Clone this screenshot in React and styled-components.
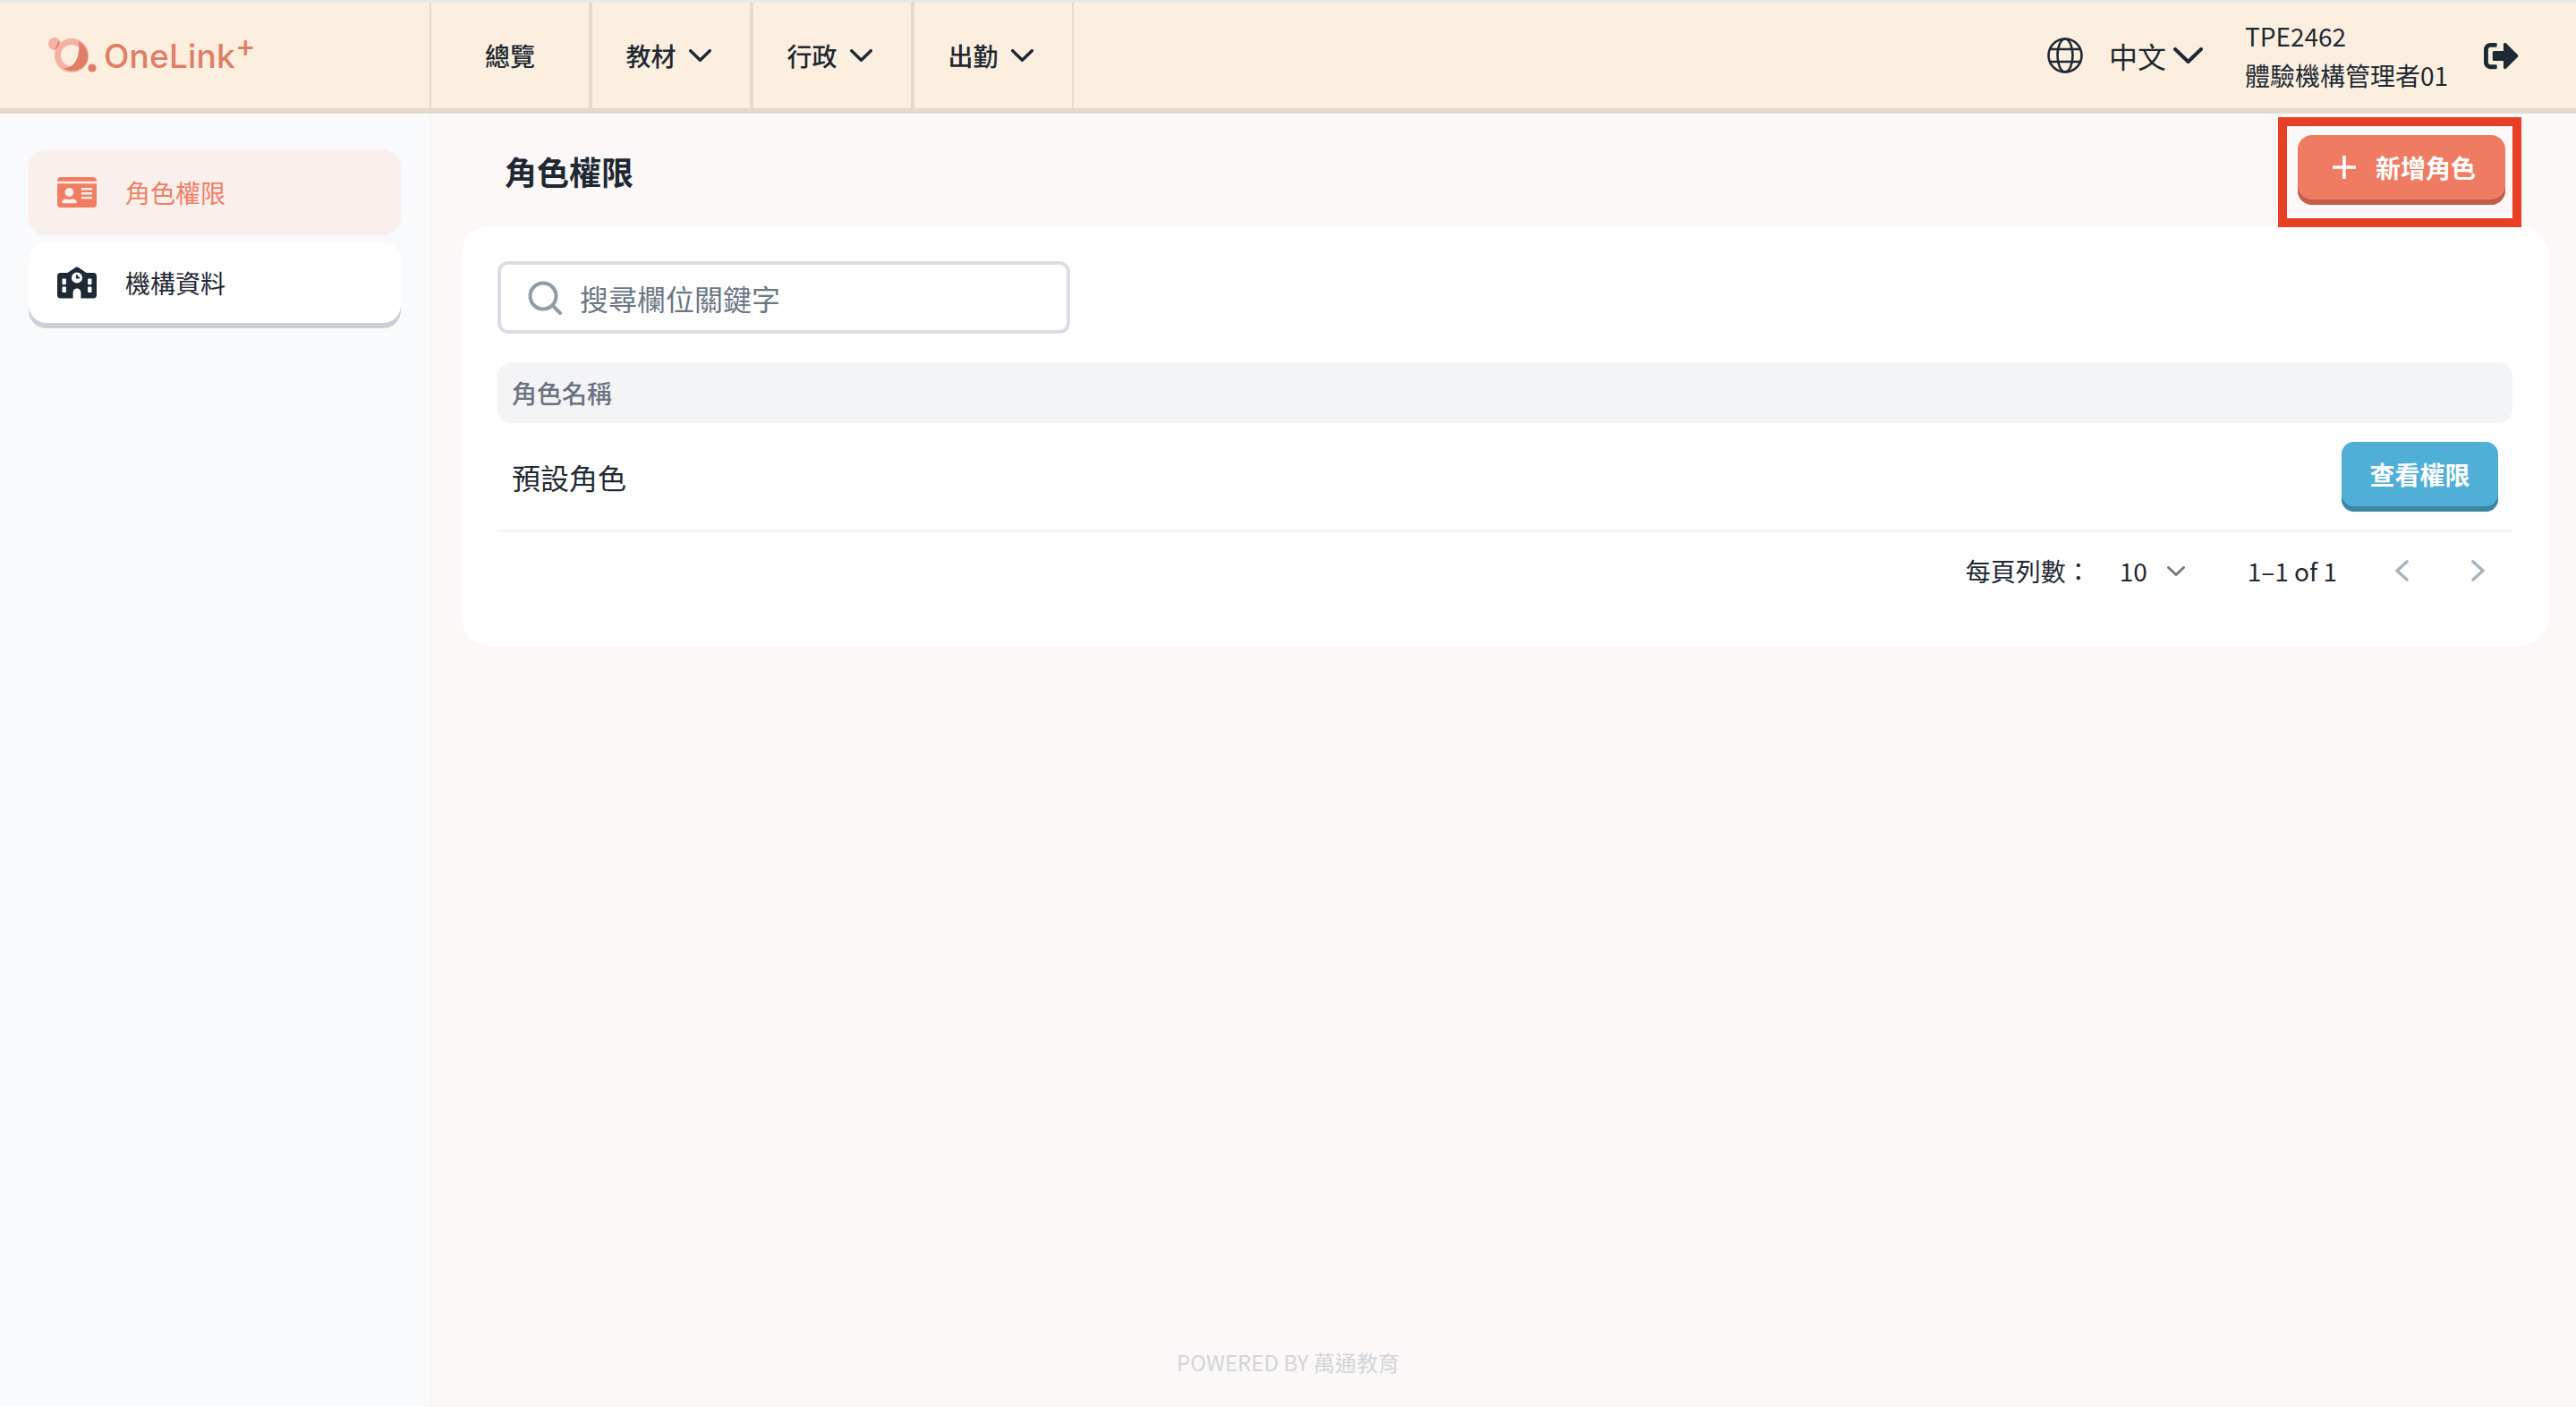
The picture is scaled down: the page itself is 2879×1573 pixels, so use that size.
import React from "react";
import styled, { createGlobalStyle } from "styled-components";
import { FaIdCard, FaSignOutAlt } from "react-icons/fa";
import { FaSchool } from "react-icons/fa6";

const Global = createGlobalStyle`
  html, body { margin: 0; padding: 0; height: 100%; }
  body { font-family: "Noto Sans CJK TC", "Noto Sans", sans-serif; color: #1f2933; background: #fcf8f7; }
  * { box-sizing: border-box; }
`;

const Page = styled.div`
  position: relative;
  display: flex;
  flex-direction: column;
  height: 1573px;
  overflow: hidden;
`;

const Header = styled.header`
  display: flex;
  align-items: stretch;
  height: 127px;
  background: #fcefdf;
  border-top: 3px solid #e8e8ec;
  border-bottom: 6px solid #e3d9cf;
`;

const Brand = styled.div`
  display: flex;
  align-items: center;
  width: 480px;
  padding-left: 52px;
  gap: 2px;
`;

const BrandName = styled.span`
  font-family: "Inter", "Noto Sans", sans-serif;
  font-size: 37px;
  font-weight: 500;
  line-height: 1;
  letter-spacing: 0.2px;
  color: #e07e66;
  position: relative;
  top: 0;
  sup {
    font-size: 34px;
    font-weight: 500;
    line-height: 0;
    position: relative;
    top: -3px;
    vertical-align: 10px;
  }
`;

const Nav = styled.nav`
  display: flex;
`;

const NavItem = styled.div`
  display: flex;
  align-items: center;
  justify-content: center;
  gap: 14px;
  width: 180px;
  padding-right: ${(p) => (p.$menu ? 6 : 0)}px;
  border-left: 2px solid #e3d9cf;
  border-right: 2px solid #e3d9cf;
  font-size: 28px;
  font-weight: 500;
  color: #1f2933;
`;

const Chevron = styled.svg`
  width: ${(p) => p.$w}px;
  height: ${(p) => p.$h}px;
  fill: none;
  stroke: ${(p) => p.$color || "#1f2933"};
  stroke-width: ${(p) => p.$sw || 3};
  stroke-linecap: round;
  stroke-linejoin: round;
  flex: none;
`;

const HeaderRight = styled.div`
  margin-left: auto;
  display: flex;
  align-items: center;
  padding-right: 64px;
`;

const Globe = styled.svg`
  width: 40px;
  height: 40px;
  fill: none;
  stroke: #1f2933;
  stroke-width: 2.6;
  margin-right: 29px;
`;

const Lang = styled.span`
  font-size: 32px;
  line-height: 1;
  margin-right: 8px;
`;

const User = styled.div`
  display: flex;
  flex-direction: column;
  margin-left: 47px;
  margin-right: 40px;
  font-size: 28px;
  line-height: 44px;
  color: #1f2933;
  white-space: nowrap;
`;

const Logout = styled(FaSignOutAlt)`
  width: 39px;
  height: 39px;
  color: #1f2933;
`;

const Body = styled.div`
  flex: 1;
  display: flex;
  min-height: 0;
`;

const Sidebar = styled.aside`
  width: 484px;
  flex: none;
  background: #f8fafc;
  border-right: 4px solid #f9f6f4;
  padding: 40px 32px;
  display: flex;
  flex-direction: column;
  gap: 8px;
`;

const SideItem = styled.div`
  display: flex;
  align-items: center;
  gap: 32px;
  width: 416px;
  height: 96px;
  padding: 0 32px ${(p) => (p.$active ? 0 : 6)}px;
  border-radius: 20px;
  font-size: 28px;
  background: ${(p) => (p.$active ? "#f9f0ee" : "#fff")};
  color: ${(p) => (p.$active ? "#f27d62" : "#1f2933")};
  box-shadow: ${(p) => (p.$active ? "none" : "inset 0 -6px 0 #c9d0d9")};
  svg { width: 44px; height: 40px; flex: none; }
`;

const Main = styled.main`
  flex: 1;
  min-width: 0;
  padding: 0 31px 0 32px;
`;

const TitleRow = styled.div`
  height: 126px;
  display: flex;
  align-items: flex-start;
  justify-content: space-between;
  padding: 24px 48px 0 48px;
`;

const Title = styled.h1`
  margin: 14px 0 0;
  font-size: 36px;
  font-weight: 700;
  line-height: 52px;
  color: #1f2933;
`;

const Annotated = styled.div`
  position: relative;
  &::after {
    content: "";
    position: absolute;
    left: -22px;
    right: -18px;
    top: -20px;
    bottom: -25px;
    border: 10px solid #e94025;
    pointer-events: none;
  }
`;

const AddButton = styled.button`
  display: flex;
  align-items: center;
  gap: 22px;
  width: 232px;
  height: 78px;
  padding: 0 0 6px 39px;
  border: 0;
  border-radius: 16px;
  background: #ef7c62;
  box-shadow: inset 0 -6px 0 #c05e46;
  color: #fff;
  font: 700 28px "Noto Sans CJK TC", sans-serif;
`;

const Plus = styled.svg`
  width: 26px;
  height: 26px;
  stroke: #fff;
  stroke-width: 3.6;
  flex: none;
`;

const Card = styled.section`
  background: #fff;
  border-radius: 32px;
  padding: 39px 40px 41px;
`;

const Search = styled.label`
  display: flex;
  align-items: center;
  width: 640px;
  height: 81px;
  padding: 0 30px;
  gap: 18px;
  border: 4px solid #dadee4;
  border-radius: 12px;
  margin-bottom: 32px;
`;

const SearchIcon = styled.svg`
  width: 38px;
  height: 38px;
  fill: none;
  stroke: #8f9ba8;
  stroke-width: 4;
  stroke-linecap: round;
  flex: none;
`;

const SearchInput = styled.input`
  flex: 1;
  min-width: 0;
  border: 0;
  outline: 0;
  background: none;
  font: 400 32px "Noto Sans CJK TC", sans-serif;
  color: #6b7785;
  &::placeholder { color: #6b7785; opacity: 1; }
`;

const TableHead = styled.div`
  height: 68px;
  display: flex;
  align-items: center;
  padding: 0 16px;
  border-radius: 16px;
  background: #f3f4f6;
  color: #6b7280;
  font-size: 28px;
  font-weight: 500;
`;

const Row = styled.div`
  height: 122px;
  display: flex;
  align-items: center;
  justify-content: space-between;
  padding: 0 16px;
  border-bottom: 3px solid #f3f4f6;
  font-size: 32px;
`;

const ViewButton = styled.button`
  width: 175px;
  height: 78px;
  padding: 0 0 6px;
  border: 0;
  border-radius: 14px;
  background: #4fafd6;
  box-shadow: inset 0 -6px 0 #3e85a1;
  color: #fff;
  font: 700 28px "Noto Sans CJK TC", sans-serif;
`;

const Pager = styled.div`
  height: 86px;
  display: flex;
  align-items: center;
  justify-content: flex-end;
  padding-right: 30px;
  font-size: 28px;
  color: #1f2933;
`;

const PageSize = styled.span`
  margin-left: 32px;
  margin-right: 22px;
`;

const Range = styled.span`
  margin-left: 70px;
  margin-right: 64px;
`;

const PrevNext = styled(Chevron)`
  & + & { margin-left: 70px; }
`;

const Footer = styled.footer`
  position: absolute;
  left: 0;
  right: 0;
  bottom: 32px;
  text-align: center;
  font-size: 24px;
  line-height: 36px;
  color: #d1d5da;
`;

const Logo = () => (
  <svg width="62" height="46" viewBox="0 0 62 46" style={{ flex: "none" }}>
    <circle cx="9" cy="10" r="7" fill="#f4b2a4" />
    <circle cx="28" cy="23" r="15.5" fill="none" stroke="#f4b2a4" strokeWidth="7" />
    <path d="M36 7 C47 14 50 28 41 36 C35 41 25 42 19 37 C30 38 38 27 36 7Z" fill="#e07e66" />
    <path d="M9 17 L14 6 C15 9 14 14 9 17Z" fill="#e07e66" />
    <circle cx="51" cy="37" r="4.6" fill="#e07e66" />
  </svg>
);

const Down = ({ w, h, sw, color }) => (
  <Chevron $w={w} $h={h} $sw={sw} $color={color} viewBox={`0 0 ${w} ${h}`}>
    <path d={`M${sw / 2} ${sw / 2} L${w / 2} ${h - sw / 2} L${w - sw / 2} ${sw / 2}`} />
  </Chevron>
);

const menus = ["教材", "行政", "出勤"];

export default function App() {
  return (
    <>
      <Global />
      <Page>
        <Header>
          <Brand>
            <Logo />
            <BrandName>
              OneLink<sup>+</sup>
            </BrandName>
          </Brand>
          <Nav>
            <NavItem>總覽</NavItem>
            {menus.map((m) => (
              <NavItem key={m} $menu>
                {m}
                <Down w={25} h={14} sw={3.4} />
              </NavItem>
            ))}
          </Nav>
          <HeaderRight>
            <Globe viewBox="0 0 40 40">
              <ellipse cx="20" cy="20" rx="18.5" ry="18.5" />
              <ellipse cx="20" cy="20" rx="8.5" ry="18.5" />
              <path d="M3 13h34M3 27h34" />
            </Globe>
            <Lang>中文</Lang>
            <Down w={33} h={18} sw={4} />
            <User>
              <span>TPE2462</span>
              <span>體驗機構管理者01</span>
            </User>
            <Logout />
          </HeaderRight>
        </Header>
        <Body>
          <Sidebar>
            <SideItem $active>
              <FaIdCard />
              角色權限
            </SideItem>
            <SideItem>
              <FaSchool />
              機構資料
            </SideItem>
          </Sidebar>
          <Main>
            <TitleRow>
              <Title>角色權限</Title>
              <Annotated>
                <AddButton>
                  <Plus viewBox="0 0 26 26">
                    <path d="M13 0v26M0 13h26" />
                  </Plus>
                  新增角色
                </AddButton>
              </Annotated>
            </TitleRow>
            <Card>
              <Search>
                <SearchIcon viewBox="0 0 38 38">
                  <circle cx="17" cy="17" r="14.5" />
                  <path d="M27.5 27.5L36 36" />
                </SearchIcon>
                <SearchInput placeholder="搜尋欄位關鍵字" />
              </Search>
              <TableHead>角色名稱</TableHead>
              <Row>
                預設角色
                <ViewButton>查看權限</ViewButton>
              </Row>
              <Pager>
                <span>每頁列數：</span>
                <PageSize>10</PageSize>
                <Down w={20} h={11} sw={2.8} color="#6b7785" />
                <Range>1–1 of 1</Range>
                <PrevNext $w={16} $h={24} $sw={3.6} $color="#aab2bb" viewBox="0 0 16 24">
                  <path d="M14 2L3 12l11 10" />
                </PrevNext>
                <PrevNext $w={16} $h={24} $sw={3.6} $color="#aab2bb" viewBox="0 0 16 24">
                  <path d="M2 2l11 10L2 22" />
                </PrevNext>
              </Pager>
            </Card>
          </Main>
        </Body>
        <Footer>POWERED BY 萬通教育</Footer>
      </Page>
    </>
  );
}
